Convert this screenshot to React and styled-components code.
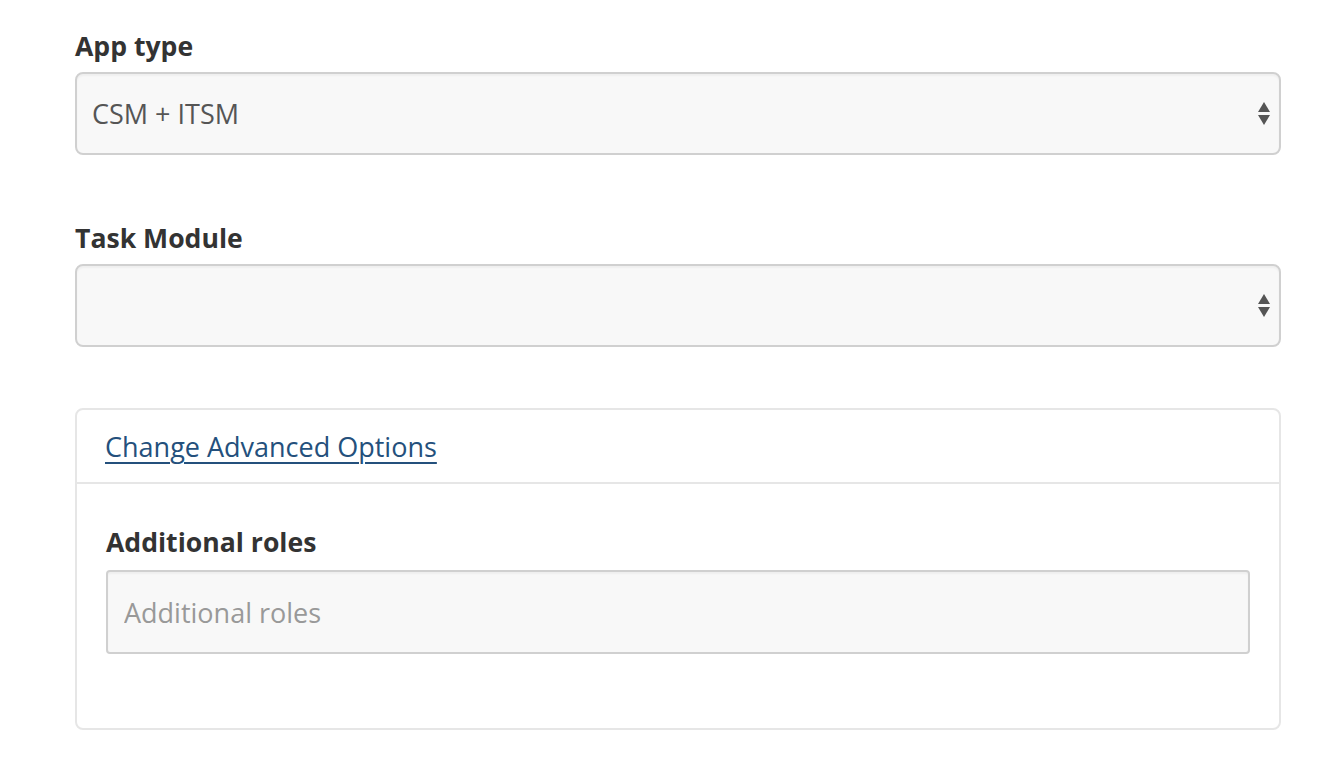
import React from "react"
import styled, { createGlobalStyle } from "styled-components"

const GlobalStyle = createGlobalStyle`
  body {
    margin: 0;
    background: #fff;
    font-family: "Open Sans", "Noto Sans", sans-serif;
    color: #333;
  }
`

const Page = styled.div`
  padding: 28px 53px 40px 75px;
`

const FormGroup = styled.div`
  display: flex;
  flex-direction: column;
  gap: ${(p) => p.gap || 8}px;
  margin-bottom: ${(p) => p.spacing || 0}px;
`

const Label = styled.label`
  font-size: 26.6px;
  font-weight: 700;
  line-height: 36px;
  color: #333;
`

const SelectBox = styled.div`
  position: relative;
  height: 83px;
  box-sizing: border-box;
  border: 2px solid #d0d0d0;
  border-radius: 8px;
  background: #f8f8f8;
  box-shadow: inset 0 2px 2px rgba(0, 0, 0, 0.04);
  display: flex;
  align-items: center;
  padding: 0 15px;
  font-size: 27px;
  color: #555;
`

const Arrows = styled.svg`
  position: absolute;
  right: 7px;
  top: 50%;
  transform: translateY(-50%);
`

const Panel = styled.div`
  border: 2px solid #e6e6e6;
  border-radius: 8px;
  background: #fff;
`

const PanelHeader = styled.div`
  padding: 19px 28px 17px;
  border-bottom: 2px solid #e6e6e6;
`

const AdvancedLink = styled.a`
  font-size: 27px;
  line-height: 36px;
  color: #24507c;
  text-decoration: underline;
  text-underline-offset: 5px;
  text-decoration-thickness: 2px;
  cursor: pointer;
`

const PanelBody = styled.div`
  padding: 40px 29px 74px 29px;
`

const TextInput = styled.input`
  height: 84px;
  box-sizing: border-box;
  border: 2px solid #d0d0d0;
  border-radius: 4px;
  background: #f8f8f8;
  box-shadow: inset 0 2px 2px rgba(0, 0, 0, 0.04);
  padding: 0 16px;
  font-family: inherit;
  font-size: 27px;
  color: #555;
  outline: none;

  &::placeholder {
    color: #999;
  }
`

const SelectArrows = () => (
  <Arrows width="16" height="26" viewBox="0 0 16 26">
    <path d="M8 1 L14 11 L2 11 Z" fill="#555" />
    <path d="M2 14 L14 14 L8 24 Z" fill="#555" />
  </Arrows>
)

const Select = ({ value }) => (
  <SelectBox>
    <span>{value}</span>
    <SelectArrows />
  </SelectBox>
)

export default function App() {
  return (
    <Page>
      <GlobalStyle />
      <FormGroup spacing={65}>
        <Label>App type</Label>
        <Select value="CSM + ITSM" />
      </FormGroup>
      <FormGroup spacing={61}>
        <Label>Task Module</Label>
        <Select value="" />
      </FormGroup>
      <Panel>
        <PanelHeader>
          <AdvancedLink>Change Advanced Options</AdvancedLink>
        </PanelHeader>
        <PanelBody>
          <FormGroup gap={10}>
            <Label>Additional roles</Label>
            <TextInput placeholder="Additional roles" />
          </FormGroup>
        </PanelBody>
      </Panel>
    </Page>
  )
}
